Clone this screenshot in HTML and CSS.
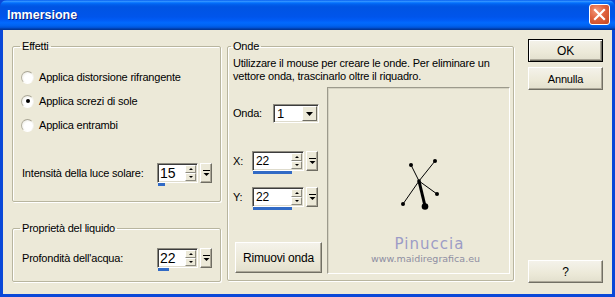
FILE: index.html
```html
<!DOCTYPE html>
<html lang="it">
<head>
<meta charset="utf-8">
<title>Immersione</title>
<link rel="stylesheet" href="styles.css">
</head>
<body>
<div class="window">
  <div class="titlebar">
    <span class="title">Immersione</span>
    <span class="close"><svg width="13" height="13" viewBox="0 0 13 13"><path d="M2 2 L11 11 M11 2 L2 11" stroke="#fff" stroke-width="2.2" stroke-linecap="square"/></svg></span>
  </div>
  <div class="client">
    <div class="col-left">
      <fieldset class="group effetti">
        <legend>Effetti</legend>
        <div class="radios">
          <label class="radio"><span class="dot"></span>Applica distorsione rifrangente</label>
          <label class="radio"><span class="dot checked"></span>Applica screzi di sole</label>
          <label class="radio"><span class="dot"></span>Applica entrambi</label>
        </div>
        <div class="field intensity">
          <span class="field-label">Intensità della luce solare:</span>
          <div class="spin">
            <div class="spin-row">
              <div class="spin-box w41"><span class="spin-value big">15</span><span class="spin-arrows"><span class="arr up"></span><span class="arr down"></span></span></div>
              <span class="spin-pop"><svg width="7" height="9" viewBox="0 0 7 9"><path d="M0 1.5 H7" stroke="#000"/><path d="M0.5 4 H6.5 L3.5 7 Z" fill="#000"/></svg></span>
            </div>
            <div class="spin-bar" style="width:7px"></div>
          </div>
        </div>
      </fieldset>
      <fieldset class="group liquido">
        <legend>Proprietà del liquido</legend>
        <div class="field depth">
          <span class="field-label">Profondità dell'acqua:</span>
          <div class="spin">
            <div class="spin-row">
              <div class="spin-box w41"><span class="spin-value big">22</span><span class="spin-arrows"><span class="arr up"></span><span class="arr down"></span></span></div>
              <span class="spin-pop"><svg width="7" height="9" viewBox="0 0 7 9"><path d="M0 1.5 H7" stroke="#000"/><path d="M0.5 4 H6.5 L3.5 7 Z" fill="#000"/></svg></span>
            </div>
            <div class="spin-bar" style="width:11px"></div>
          </div>
        </div>
      </fieldset>
    </div>

    <fieldset class="group onde">
      <legend>Onde</legend>
      <p class="hint">Utilizzare il mouse per creare le onde. Per eliminare un vettore onda, trascinarlo oltre il riquadro.</p>
      <div class="onde-row">
        <div class="onde-controls">
          <div class="ctl onda">
            <span class="ctl-label">Onda:</span>
            <div class="combo"><span class="combo-value">1</span><span class="combo-btn"><svg width="7" height="4" viewBox="0 0 7 4"><path d="M0 0 H7 L3.5 4 Z" fill="#000"/></svg></span></div>
          </div>
          <div class="ctl cx">
            <span class="ctl-label">X:</span>
            <div class="spin">
              <div class="spin-row">
                <div class="spin-box w52"><span class="spin-value">22</span><span class="spin-arrows"><span class="arr up"></span><span class="arr down"></span></span></div>
                <span class="spin-pop"><svg width="7" height="9" viewBox="0 0 7 9"><path d="M0 1.5 H7" stroke="#000"/><path d="M0.5 4 H6.5 L3.5 7 Z" fill="#000"/></svg></span>
              </div>
              <div class="spin-bar" style="width:39px"></div>
            </div>
          </div>
          <div class="ctl cy">
            <span class="ctl-label">Y:</span>
            <div class="spin">
              <div class="spin-row">
                <div class="spin-box w52"><span class="spin-value">22</span><span class="spin-arrows"><span class="arr up"></span><span class="arr down"></span></span></div>
                <span class="spin-pop"><svg width="7" height="9" viewBox="0 0 7 9"><path d="M0 1.5 H7" stroke="#000"/><path d="M0.5 4 H6.5 L3.5 7 Z" fill="#000"/></svg></span>
              </div>
              <div class="spin-bar" style="width:39px"></div>
            </div>
          </div>
          <button class="btn remove" type="button">Rimuovi onda</button>
        </div>
        <div class="canvas">
          <svg class="vectors" width="181" height="185" viewBox="0 0 181 185">
            <g stroke="#000" stroke-width="1">
              <line x1="91" y1="93" x2="83" y2="77"/>
              <line x1="91" y1="93" x2="107" y2="73"/>
              <line x1="91" y1="93" x2="75" y2="116"/>
              <line x1="91" y1="93" x2="109" y2="106"/>
            </g>
            <line x1="91" y1="93" x2="97" y2="118" stroke="#000" stroke-width="3"/>
            <g fill="#000">
              <circle cx="83" cy="77" r="2"/>
              <circle cx="107" cy="73" r="2"/>
              <circle cx="75" cy="116" r="2"/>
              <circle cx="109" cy="106" r="2"/>
              <circle cx="91" cy="93" r="1.8"/>
              <circle cx="97" cy="118.5" r="3.3"/>
            </g>
          </svg>
          <div class="watermark">
            <span class="wm-name">Pinuccia</span>
            <span class="wm-url">www.maidiregrafica.eu</span>
          </div>
        </div>
      </div>
    </fieldset>

    <div class="col-buttons">
      <button class="btn default" type="button">OK</button>
      <button class="btn" type="button">Annulla</button>
      <button class="btn help" type="button">?</button>
    </div>
  </div>
</div>
</body>
</html>
```

FILE: styles.css
```css
* { box-sizing: border-box; }
html, body { margin: 0; padding: 0; }
body {
  width: 615px;
  height: 297px;
  overflow: hidden;
  font-family: "Liberation Sans", Arial, sans-serif;
  font-size: 11px;
  letter-spacing: -0.2px;
  color: #000;
  background: #ece9d8;
}

.window {
  width: 615px;
  height: 297px;
  display: flex;
  flex-direction: column;
  background: #0a48d8;
}

.titlebar {
  height: 30px;
  flex: none;
  display: flex;
  align-items: center;
  justify-content: space-between;
  padding: 0 5px 1px 7px;
  background: linear-gradient(to bottom, #0058ee 0%, #3593ff 4%, #288eff 6%, #127dff 8%, #036ffc 10%, #0262ee 14%, #0057e5 20%, #0054e3 24%, #0055eb 56%, #005bf5 66%, #026afe 76%, #0062ef 86%, #0052d6 92%, #0040ab 96%, #003092 100%);
  border-radius: 7px 7px 0 0;
}
.title {
  color: #fff;
  font-family: "Liberation Sans", Arial, sans-serif;
  font-weight: bold;
  font-size: 12.5px;
  letter-spacing: 0;
  text-shadow: 1px 1px 0 #0a1f80;
}
.close {
  width: 21px;
  height: 21px;
  display: flex;
  align-items: center;
  justify-content: center;
  border: 1px solid #fff;
  border-radius: 3px;
  background: radial-gradient(circle at 35% 30%, #f49a7c 0%, #e0623e 45%, #c3451f 100%);
}

.client {
  flex: 1;
  margin: 0 3px 3px 3px;
  background: #ece9d8;
  display: flex;
  align-items: flex-start;
  padding: 10px 9px 0 9px;
}

.col-left {
  width: 209px;
  flex: none;
  display: flex;
  flex-direction: column;
}

.group {
  margin: 0;
  padding: 0 8px 0 9px;
  border: 1px solid #b8b59f;
  border-radius: 2px;
  box-shadow: inset 1px 1px 0 #fff, 1px 1px 0 #fff;
  min-width: 0;
}
.group legend {
  padding: 0 2px;
  margin-left: -2px;
  line-height: 13px;
  height: 13px;
}

.effetti { height: 162px; }
.liquido { height: 60px; margin-top: 20px; }

.radios {
  margin-top: 12px;
  display: flex;
  flex-direction: column;
}
.radio {
  height: 24px;
  display: flex;
  align-items: center;
  gap: 5px;
  margin-left: -1px;
}
.dot {
  width: 13px;
  height: 13px;
  border-radius: 50%;
  background: radial-gradient(circle at 60% 60%, #fff 0%, #fff 45%, #e4e2d8 100%);
  border: 1px solid;
  border-color: #a9a696 #f4f3ee #fff #b2af9f;
  display: flex;
  align-items: center;
  justify-content: center;
}
.dot.checked::after {
  content: "";
  width: 4px;
  height: 4px;
  border-radius: 50%;
  background: #000;
}

.field {
  display: flex;
  align-items: flex-start;
}
.field-label {
  width: 135px;
  line-height: 20px;
  flex: none;
}
.intensity { margin-top: 26px; }
.depth { margin-top: 13px; }

.spin {
  display: flex;
  flex-direction: column;
}
.spin-row {
  display: flex;
  gap: 2px;
}
.spin-box {
  height: 20px;
  display: flex;
  background: #fff;
  border: 1px solid;
  border-color: #8d8b80 #fff #fff #8d8b80;
  box-shadow: inset 1px 1px 0 #3c3c3c, inset -1px -1px 0 #dedbcc;
  padding: 1px 1px 1px 2px;
}
.w41 { width: 41px; }
.w52 { width: 52px; }
.spin-value {
  flex: 1;
  line-height: 16px;
  font-size: 12px;
  padding-left: 0;
}
.spin-value.big { font-size: 14px; letter-spacing: 0; }
.spin-arrows {
  width: 11px;
  display: flex;
  flex-direction: column;
}
.arr {
  flex: 1;
  background: #ece9d8;
  border: 1px solid;
  border-color: #fff #8d8b80 #8d8b80 #fff;
  display: flex;
  align-items: center;
  justify-content: center;
}
.arr::after {
  content: "";
  width: 0;
  height: 0;
  border-left: 2px solid transparent;
  border-right: 2px solid transparent;
}
.arr.up::after { border-bottom: 2px solid #000; }
.arr.down::after { border-top: 2px solid #000; }
.spin-pop {
  width: 12px;
  height: 20px;
  background: #ece9d8;
  border: 1px solid;
  border-color: #fff #6f6d63 #6f6d63 #fff;
  box-shadow: inset -1px -1px 0 #aca899;
  display: flex;
  align-items: center;
  justify-content: center;
}
.spin-bar {
  height: 3px;
  background: #316ac5;
  margin-left: 1px;
}

.onde {
  width: 287px;
  height: 241px;
  flex: none;
  margin-left: 6px;
  padding: 0 3px 0 5px;
}
.hint {
  margin: 4px 0 0 0;
  line-height: 13px;
}
.onde-row {
  display: flex;
  margin-top: 4px;
}
.onde-controls {
  width: 94px;
  flex: none;
  display: flex;
  flex-direction: column;
}
.ctl {
  display: flex;
  align-items: flex-start;
}
.ctl-label { line-height: 19px; }
.onda { margin-top: 17px; }
.onda .ctl-label { width: 40px; }
.combo {
  width: 46px;
  height: 19px;
  display: flex;
  background: #fff;
  border: 1px solid;
  border-color: #8d8b80 #fff #fff #8d8b80;
  box-shadow: inset 1px 1px 0 #3c3c3c, inset -1px -1px 0 #dedbcc;
  padding: 1px 1px 1px 3px;
}
.combo-value {
  flex: 1;
  font-size: 13px;
  line-height: 16px;
}
.combo-btn {
  width: 15px;
  background: #ece9d8;
  border: 1px solid;
  border-color: #fff #6f6d63 #6f6d63 #fff;
  display: flex;
  align-items: center;
  justify-content: center;
}
.cx { margin-top: 28px; }
.cy { margin-top: 13px; }
.cx .ctl-label, .cy .ctl-label { width: 19px; line-height: 20px; }
.ctl .spin-box { padding-left: 3px; }

.btn {
  font-family: "Liberation Sans", Arial, sans-serif;
  font-size: 11px;
  letter-spacing: -0.2px;
  color: #000;
  background: linear-gradient(to bottom, #f4f2ea 0%, #ece9d8 60%, #e2dfcd 100%);
  border: 1px solid;
  border-color: #fff #716f64 #716f64 #fff;
  box-shadow: inset -1px -1px 0 #aca899;
  padding: 0;
  margin: 0;
}
.remove {
  width: 87px;
  height: 31px;
  margin-top: 32px;
  margin-left: 2px;
  font-size: 12px;
}

.canvas {
  position: relative;
  width: 183px;
  height: 187px;
  border: 1px solid;
  border-color: #9c9a8c #fff #fff #9c9a8c;
  box-shadow: inset 1px 1px 0 #d6d3c2;
  background: #ece9d8;
}
.vectors { display: block; }
.watermark {
  position: absolute;
  left: 0;
  right: 0;
  top: 147px;
  display: flex;
  flex-direction: column;
  align-items: center;
  padding-left: 22px;
}
.wm-name {
  font-family: "DejaVu Sans", sans-serif;
  font-size: 15px;
  letter-spacing: 1px;
  color: #9c9cc6;
  line-height: 18px;
}
.wm-url {
  font-family: "DejaVu Sans", sans-serif;
  font-size: 9.5px;
  letter-spacing: 0;
  color: #8e8ea2;
  line-height: 12px;
  margin-left: -8px;
}

.col-buttons {
  width: 75px;
  flex: none;
  margin-left: 14px;
  margin-top: -1px;
  display: flex;
  flex-direction: column;
}
.col-buttons .btn { width: 75px; height: 23px; }
.col-buttons .btn + .btn { margin-top: 5px; }
.btn.default {
  border: 1px solid #000;
  box-shadow: inset 1px 1px 0 #fff, inset -1px -1px 0 #716f64, inset -2px -2px 0 #aca899;
  font-size: 12px;
}
.col-buttons .btn.help { margin-top: 170px; font-size: 12px; }
```
